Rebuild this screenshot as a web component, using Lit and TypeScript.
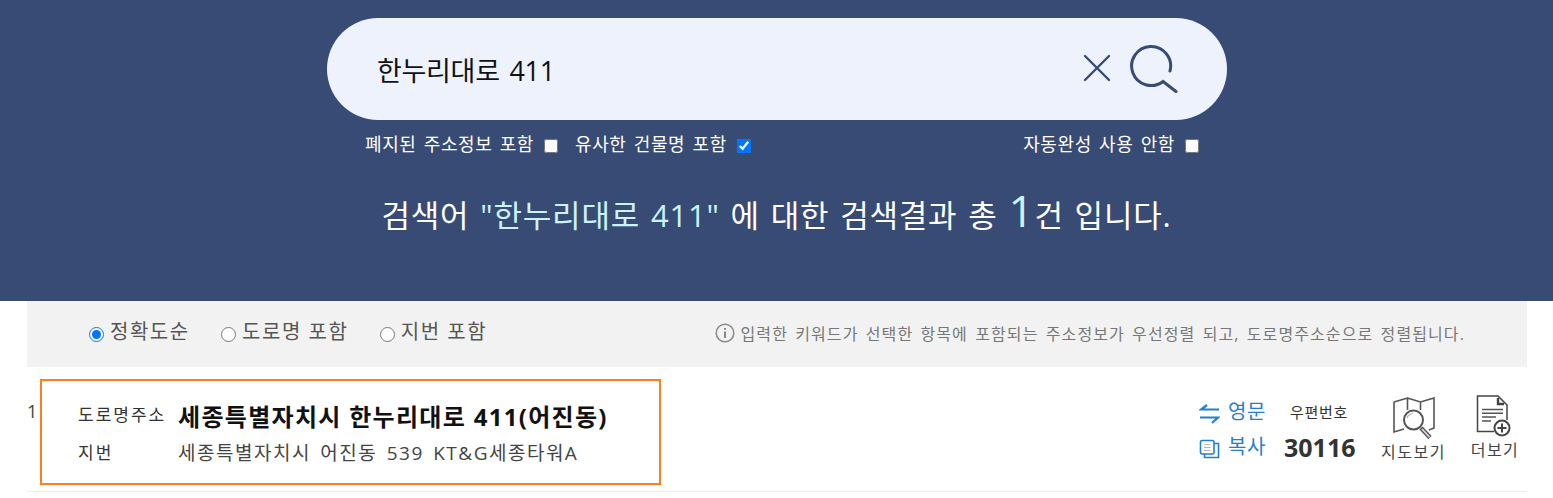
import { LitElement, html, css } from "lit";
import { customElement } from "lit/decorators.js";

@customElement("app-root")
export class AppRoot extends LitElement {
  static styles = css`
    :host {
      display: block;
      width: 1553px;
      height: 498px;
      overflow: hidden;
      background: #fff;
      font-family: "Open Sans", "Noto Sans CJK KR", sans-serif;
      color: #333;
    }
    * { box-sizing: border-box; }
    .top {
      height: 301px;
      background: #384b75;
      padding-top: 18px;
      color: #fff;
    }
    .pill {
      width: 900px;
      height: 102px;
      margin-left: 327px;
      border-radius: 51px;
      background: #eef2fd;
      display: flex;
      align-items: center;
      padding: 0 49px 0 50px;
    }
    .q {
      flex: 1;
      font-size: 27px;
      color: #111;
      line-height: 36px;
      padding-top: 4px;
      letter-spacing: -0.3px;
      word-spacing: 3px;
    }
    .clear { margin: 0 19px 3px 0; display: block; }
    .go { display: block; }
    .opts {
      width: 900px;
      margin: 10px 0 0 327px;
      display: flex;
      align-items: center;
      height: 26px;
      font-size: 18px;
      letter-spacing: 0.6px;
      word-spacing: 2px;
      padding-left: 38px;
    }
    .opts label { display: flex; align-items: center; gap: 10px; white-space: nowrap; }
    .opts input { margin: 6px 0 0; width: 14px; height: 14px; }
    .opts .b { margin-left: 17px; }
    .opts .c { margin-left: auto; margin-right: 28px; }
    .msg {
      margin-top: 34px;
      text-align: center;
      font-size: 31px;
      letter-spacing: 0.8px;
      word-spacing: 2px;
      line-height: 46px;
      white-space: nowrap;
    }
    .msg em { font-style: normal; color: #c9f4fb; }
    .msg b { font-weight: 400; font-size: 44px; color: #c9f4fb; line-height: 40px; }
    .bar {
      margin: 0 26px 0 27px;
      height: 66px;
      background: #f2f2f2;
      display: flex;
      align-items: center;
      padding: 0 62px 8px 62px;
      color: #555;
    }
    .bar label { display: flex; align-items: center; gap: 6px; font-size: 20px; letter-spacing: 1.5px; margin-right: 31.5px; white-space: nowrap; }
    .bar input { margin: 9px 0 0; width: 15px; height: 15px; }
    .note {
      margin: 6px 0 0 auto;
      display: flex;
      align-items: center;
      gap: 6px;
      font-size: 16px;
      letter-spacing: 1.1px;
      word-spacing: 2px;
      color: #777;
      white-space: nowrap;
    }
    .row {
      margin: 0 26px 0 27px;
      height: 125px;
      border-bottom: 1px solid #eee;
      display: flex;
      padding-top: 12px;
    }
    .num { font-size: 18px; width: 13px; padding-top: 22px; color: #444; line-height: 20px; }
    .box {
      width: 621px;
      height: 106px;
      border: 2px solid #ff7f1e;
      padding: 15.5px 0 0 36px;
      display: grid;
      grid-template-columns: 100px 1fr;
      grid-auto-rows: 37px;
      align-items: center;
      color: #333;
    }
    .lab { font-size: 17px; letter-spacing: 2px; white-space: nowrap; margin-bottom: 2px; }
    .lab.first { margin-bottom: 4px; }
    .road { font-size: 24px; font-weight: 700; letter-spacing: 1.3px; color: #111; white-space: nowrap; }
    .jibun { font-size: 19px; letter-spacing: 1.5px; word-spacing: 3px; color: #444; white-space: nowrap; }
    .side {
      margin-left: auto;
      display: flex;
      padding: 14px 9px 0 0;
    }
    .links { display: grid; grid-auto-rows: 35px; align-content: start; color: #1f80cf; font-size: 20px; letter-spacing: .5px; width: 91px; }
    .links div { display: flex; align-items: center; gap: 8px; }
    .links svg { margin-top: 7px; }
    .zip { width: 91.5px; }
    .zip small { display: block; font-size: 15px; letter-spacing: .7px; line-height: 38px; color: #333; white-space: nowrap; }
    .zip strong { display: block; font-size: 25px; line-height: 32px; color: #333; margin-left: -6px; }
    .tool { display: flex; flex-direction: column; align-items: center; font-size: 16px; letter-spacing: 1.5px; line-height: 22px; color: #444; gap: 2px; white-space: nowrap; }
    .tool.map { width: 64px; }
    .tool.map svg { margin-top: 4px; }
    .tool.more { width: 46px; margin-left: 26.5px; }
    .tool.more svg { margin-top: 2px; }
    svg { display: block; flex: none; }
  `;

  render() {
    return html`
      <div class="top">
        <div class="pill">
          <div class="q">한누리대로 411</div>
          <svg class="clear" width="28" height="28" viewBox="0 0 28 28" fill="none" stroke="#384b75" stroke-width="2.4" stroke-linecap="round"><path d="M2 2 26 26M26 2 2 26"/></svg>
          <svg class="go" width="48" height="48" viewBox="0 0 48 48" fill="none" stroke="#384b75" stroke-width="3" stroke-linecap="round"><path d="M40 26A19.500 19.500 0 1 0 33 36.500L46 46.500"/></svg>
        </div>
        <div class="opts">
          <label>폐지된 주소정보 포함 <input type="checkbox" /></label>
          <label class="b">유사한 건물명 포함 <input type="checkbox" checked /></label>
          <label class="c">자동완성 사용 안함 <input type="checkbox" /></label>
        </div>
        <div class="msg">검색어 <em>"한누리대로 411"</em> 에 대한 검색결과 총 <b>1</b>건 입니다.</div>
      </div>
      <div class="bar">
        <label><input type="radio" name="s" checked />정확도순</label>
        <label><input type="radio" name="s" />도로명 포함</label>
        <label><input type="radio" name="s" />지번 포함</label>
        <div class="note">
          <svg width="20" height="20" viewBox="0 0 20 20" fill="none" stroke="#888"><circle cx="10" cy="10" r="8.800" stroke-width="1.500"/><path d="M10 8.500V15" stroke-width="2"/><path d="M10 5V6.800" stroke-width="2"/></svg>
          입력한 키워드가 선택한 항목에 포함되는 주소정보가 우선정렬 되고, 도로명주소순으로 정렬됩니다.
        </div>
      </div>
      <div class="row">
        <div class="num">1</div>
        <div class="box">
          <div class="lab first">도로명주소</div>
          <div class="road">세종특별자치시 한누리대로 411(어진동)</div>
          <div class="lab">지번</div>
          <div class="jibun">세종특별자치시 어진동 539 KT&G세종타워A</div>
        </div>
        <div class="side">
          <div class="links">
            <div>
              <svg width="21" height="20" viewBox="0 0 21 20" fill="none" stroke="#1f80cf" stroke-width="2.2"><path d="M20 5.500H2L8 1M1 13.500H19L13 19"/></svg>
              영문
            </div>
            <div>
              <svg width="21" height="20" viewBox="0 0 21 20" fill="none" stroke="#1f80cf" stroke-width="1.600"><path d="M15 4.500H19.500V18.500H5.500V15"/><rect x="1.500" y="1.500" width="13.500" height="13.500" rx="1.500"/><path d="M5 5.500H11.500M5 8.500H11.500M5 11.500H11.500" stroke="#b5b5b5" stroke-width="1"/></svg>
              복사
            </div>
          </div>
          <div class="zip"><small>우편번호</small><strong>30116</strong></div>
          <div class="tool map">
            <svg width="44" height="42" viewBox="0 0 44 42" fill="none" stroke="#555" stroke-width="1.600"><path d="M2 5 15.500 1 28.500 5 42 1V31L37 33M2 5V35L12 32M15.500 1V13M28.500 5V13"/><circle cx="21.500" cy="23" r="9.500" stroke-width="2"/><path d="M15 21C16 18 18 17 21 16.500" stroke="#aaa" stroke-width="1.200"/><path d="M29 31 38 40.500" stroke-width="4.500"/><path d="M30 32 37.500 40" stroke="#ddd" stroke-width="1.800"/></svg>
            지도보기
          </div>
          <div class="tool more">
            <svg width="38" height="42" viewBox="0 0 38 42" fill="none" stroke="#444" stroke-width="1.500"><path d="M18 36.500H1.500V1H22L31 10V25"/><path d="M22 3V9H28" stroke-width="2.400"/><path d="M6 14.500H27M6 18.300H27M6 22H20M6 26H15" stroke="#555" stroke-width="1.400"/><circle cx="26" cy="33" r="7.500" stroke-width="2"/><path d="M21.500 33H30.500M26 28.500V37.500" stroke-width="2"/></svg>
            더보기
          </div>
        </div>
      </div>
    `;
  }
}
